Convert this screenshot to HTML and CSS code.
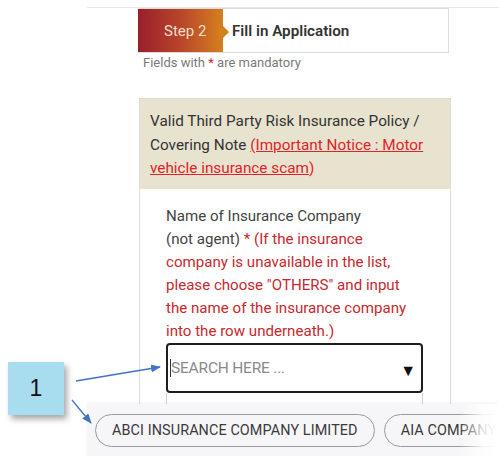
FILE: index.html
```html
<!DOCTYPE html>
<html>
<head>
<meta charset="utf-8">
<link rel="stylesheet" href="styles.css">
</head>
<body>
<div class="page">
  <div class="step">
    <div class="step-num">Step 2</div>
    <div class="step-title">Fill in Application</div>
  </div>
  <p class="mandatory">Fields with <span class="req">*</span> are mandatory</p>

  <div class="panel">
    <div class="panel-head">Valid Third Party Risk Insurance Policy / Covering Note <a class="notice" href="#">(Important Notice : Motor vehicle insurance scam</a><span class="red">)</span></div>
    <div class="panel-body">
      <div class="label">Name of Insurance Company<br>(not agent) <span class="red">* (If the insurance company is unavailable in the list, please choose "OTHERS" and input the name of the insurance company into the row underneath.)</span></div>
      <div class="search">
        <span class="caret"></span>
        <span class="placeholder">SEARCH HERE ...</span>
        <span class="tri">&#9660;</span>
      </div>
      <div class="list"></div>
    </div>
  </div>
</div>

<div class="chips">
  <span class="chip">ABCI INSURANCE COMPANY LIMITED</span>
  <span class="chip">AIA COMPANY LIMITED</span>
  <div class="fade"></div>
</div>

<div class="callout">1</div>

<svg class="arrows" width="499" height="456" viewBox="0 0 499 456">
  <defs>
    <marker id="ah" markerWidth="10" markerHeight="8" refX="9" refY="4" orient="auto" markerUnits="userSpaceOnUse">
      <path d="M0,0 L10,4 L0,8 Z" fill="#4472c4"/>
    </marker>
  </defs>
  <line x1="76" y1="381" x2="160" y2="367" stroke="#4472c4" stroke-width="1.3" marker-end="url(#ah)"/>
  <line x1="72" y1="400" x2="91" y2="423" stroke="#4472c4" stroke-width="1.3" marker-end="url(#ah)"/>
</svg>
</body>
</html>
```
FILE: styles.css
```css
html, body {
  margin: 0;
  padding: 0;
  background: #fff;
}
body {
  font-family: Roboto, "Liberation Sans", sans-serif;
  width: 499px;
  height: 456px;
  overflow: hidden;
  position: relative;
}
.page {
  margin: 7px 0 0 87px;
  border-top: 1px solid #e9e9e9;
  padding-left: 51px;
}
.step {
  display: flex;
  width: 311px;
  height: 45px;
  border: 1px solid #dcdcdc;
  border-left: none;
  box-sizing: border-box;
}
.step-num {
  position: relative;
  width: 85px;
  background: linear-gradient(90deg, #9a1f2b 0%, #b8452a 50%, #d5801f 100%);
  color: #f3ddd0;
  font-size: 15px;
  display: flex;
  align-items: center;
  padding-left: 26px;
  box-sizing: border-box;
}
.step-num::after {
  content: "";
  position: absolute;
  right: -6px;
  top: 17px;
  border-left: 6px solid #d5801f;
  border-top: 6px solid transparent;
  border-bottom: 6px solid transparent;
}
.step-title {
  display: flex;
  align-items: center;
  padding-left: 9px;
  font-weight: 600;
  font-size: 15.2px;
  color: #333;
}
.mandatory {
  margin: 2px 0 0 5px;
  font-size: 13px;
  color: #7a7a7a;
}
.req { color: #d0262c; }
.panel {
  margin-top: 28px;
  margin-left: 1px;
  width: 312px;
  border: 1px solid #dcdcdc;
  border-bottom: none;
  box-sizing: border-box;
  height: 320px;
}
.panel-head {
  background: #e8e3cf;
  padding: 11px 10px 8px 10px;
  font-size: 15.3px;
  line-height: 23.5px;
  color: #333;
}
.notice {
  color: #e0232a;
  text-decoration: underline;
}
.red { color: #c8282e; }
.panel-head .red { color: #e0232a; }
.panel-body {
  padding: 16px 27px 0 26px;
}
.label {
  font-size: 15.1px;
  line-height: 23px;
  color: #444;
}
.label .red { color: #c8282e; }
.search {
  display: flex;
  align-items: center;
  height: 50px;
  border: 2px solid #1e1e1e;
  border-radius: 4px;
  box-sizing: border-box;
  padding-left: 2px;
  padding-right: 5px;
}
.caret {
  width: 1px;
  height: 18px;
  background: #333;
}
.placeholder {
  flex: 1;
  font-size: 15.5px;
  color: #8a8a8a;
  letter-spacing: -0.2px;
}
.tri {
  font-size: 16px;
  color: #111;
  margin-top: 5px;
}
.list {
  height: 20px;
  border: 1px solid #c9d3de;
  border-top: none;
}
.chips {
  position: absolute;
  left: 87px;
  top: 404px;
  right: 0;
  bottom: 0;
  background: #f6f6f8;
  box-shadow: 0 -1px 3px rgba(0,0,0,0.06);
  display: flex;
  gap: 9px;
  padding: 10px 0 0 8px;
  overflow: hidden;
  white-space: nowrap;
}
.chip {
  display: inline-flex;
  align-items: center;
  height: 33px;
  box-sizing: border-box;
  border: 1px solid #9a9a9a;
  border-radius: 17px;
  padding: 0 16px;
  font-size: 14.4px;
  letter-spacing: 0.1px;
  color: #3a3a3a;
  background: #f6f6f8;
  flex-shrink: 0;
}
.fade {
  position: absolute;
  right: 0;
  top: 0;
  bottom: 0;
  width: 40px;
  background: linear-gradient(90deg, rgba(255,255,255,0) 0%, rgba(255,255,255,0.85) 60%, #fff 100%);
}
.callout {
  position: absolute;
  left: 8px;
  top: 362px;
  width: 56px;
  height: 53px;
  background: #a8dcef;
  box-shadow: 3px 4px 6px rgba(0,0,0,0.35);
  display: flex;
  align-items: center;
  justify-content: center;
  font-family: "Liberation Sans", sans-serif;
  font-size: 23px;
  color: #111;
}
.arrows {
  position: absolute;
  left: 0;
  top: 0;
  pointer-events: none;
}
```
